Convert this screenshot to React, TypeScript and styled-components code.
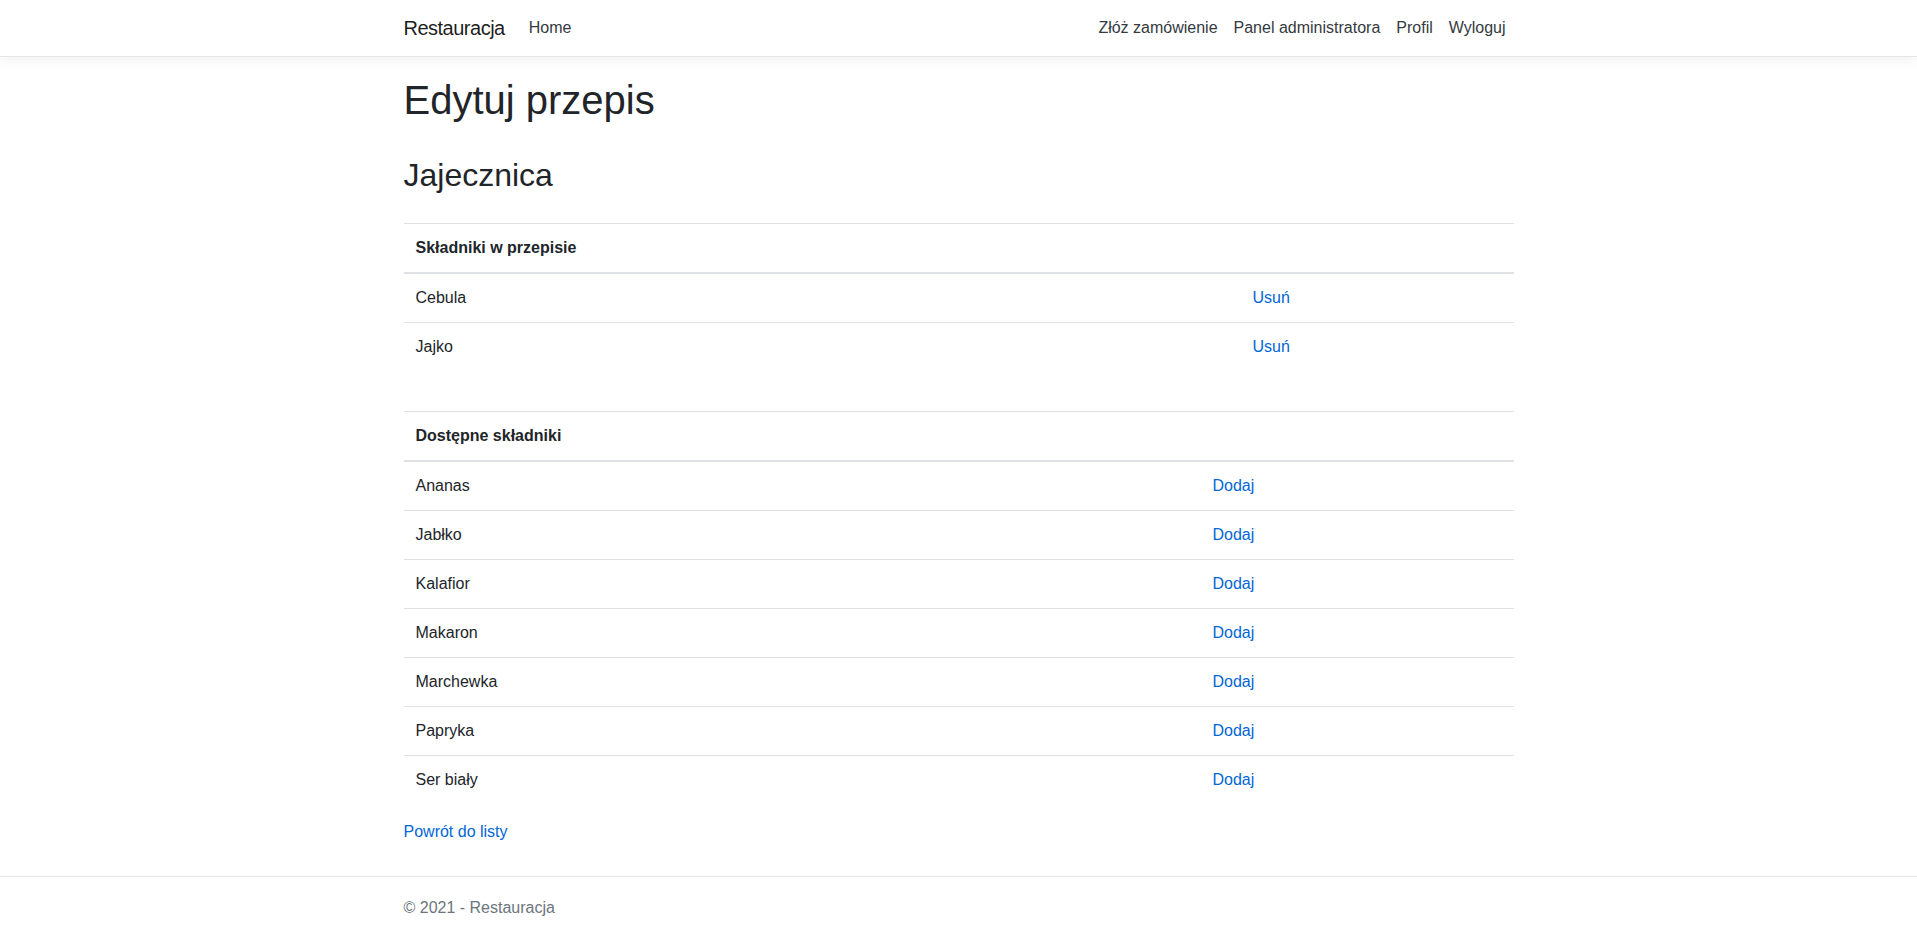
import React from "react";
import styled, { createGlobalStyle } from "styled-components";

const GlobalStyle = createGlobalStyle`
  *, *::before, *::after { box-sizing: border-box; }
  html { font-size: 16px; }
  body {
    margin: 0;
    font-family: "Liberation Sans", Arial, sans-serif;
    font-size: 16px;
    line-height: 1.5;
    color: #212529;
    background: #fff;
  }
`;

const Page = styled.div`
  min-height: 100vh;
  display: flex;
  flex-direction: column;
`;

const Container = styled.div`
  width: 100%;
  max-width: 1140px;
  padding: 0 15px;
  margin: 0 auto;
`;

const Navbar = styled.nav`
  background: #fff;
  border-bottom: 1px solid #e5e5e5;
  box-shadow: 0 0.25rem 0.75rem rgba(0, 0, 0, 0.05);
  padding: 8px 16px;
  margin-bottom: 16px;
`;

const NavInner = styled(Container)`
  display: flex;
  align-items: center;
`;

const Brand = styled.a`
  display: inline-block;
  padding: 5px 0;
  margin-right: 16px;
  font-size: 20px;
  line-height: 30px;
  letter-spacing: -0.5px;
  color: rgba(0, 0, 0, 0.9);
  text-decoration: none;
  white-space: nowrap;
`;

const NavList = styled.ul<{ $grow?: boolean }>`
  display: flex;
  list-style: none;
  margin: 0;
  padding: 0;
  flex-grow: ${(p) => (p.$grow ? 1 : 0)};
`;

const NavLink = styled.a`
  display: block;
  padding: 8px;
  color: #343a40;
  text-decoration: none;
  line-height: 24px;
`;

const Main = styled(Container)`
  flex: 1;
  padding-bottom: 16px;
`;

const Title = styled.h1`
  font-size: 40px;
  font-weight: 500;
  line-height: 1.2;
  margin: 0 0 5px;
  padding-top: 3px;
`;

const Subtitle = styled.h2`
  font-size: 32px;
  font-weight: 500;
  line-height: 1.2;
  margin: 30px 0 8px;
  padding-top: 2px;
`;

const Table = styled.table<{ $gap: number }>`
  width: 100%;
  border-collapse: collapse;
  margin: ${(p) => p.$gap}px 0 16px;
  color: #212529;
`;

const Th = styled.th<{ $w?: number }>`
  padding: 12px;
  text-align: left;
  vertical-align: bottom;
  font-weight: 700;
  border-top: 1px solid #dee2e6;
  border-bottom: 2px solid #dee2e6;
  ${(p) => (p.$w ? `width: ${p.$w}px;` : "")}
`;

const Td = styled.td`
  padding: 12px;
  vertical-align: top;
  border-top: 1px solid #dee2e6;
`;

const Link = styled.a`
  color: #0366d6;
  text-decoration: none;
`;

const Footer = styled.footer`
  border-top: 1px solid #e5e5e5;
  color: #6c757d;
  white-space: nowrap;
  padding-top: 4px;
  line-height: 53px;
`;

const inRecipe = ["Cebula", "Jajko"];
const available = [
  "Ananas",
  "Jabłko",
  "Kalafior",
  "Makaron",
  "Marchewka",
  "Papryka",
  "Ser biały",
];

export default function App() {
  return (
    <Page>
      <GlobalStyle />
      <Navbar>
        <NavInner>
          <Brand href="#">Restauracja</Brand>
          <NavList $grow>
            <li>
              <NavLink href="#">Home</NavLink>
            </li>
          </NavList>
          <NavList>
            <li>
              <NavLink href="#">Złóż zamówienie</NavLink>
            </li>
            <li>
              <NavLink href="#">Panel administratora</NavLink>
            </li>
            <li>
              <NavLink href="#">Profil</NavLink>
            </li>
            <li>
              <NavLink href="#">Wyloguj</NavLink>
            </li>
          </NavList>
        </NavInner>
      </Navbar>
      <Main as="main">
        <Title>Edytuj przepis</Title>
        <Subtitle>Jajecznica</Subtitle>
        <Table $gap={29}>
          <thead>
            <tr>
              <Th $w={837}>Składniki w przepisie</Th>
              <Th></Th>
            </tr>
          </thead>
          <tbody>
            {inRecipe.map((name) => (
              <tr key={name}>
                <Td>{name}</Td>
                <Td>
                  <Link href="#">Usuń</Link>
                </Td>
              </tr>
            ))}
          </tbody>
        </Table>
        <Table $gap={40}>
          <thead>
            <tr>
              <Th $w={797}>Dostępne składniki</Th>
              <Th></Th>
            </tr>
          </thead>
          <tbody>
            {available.map((name) => (
              <tr key={name}>
                <Td>{name}</Td>
                <Td>
                  <Link href="#">Dodaj</Link>
                </Td>
              </tr>
            ))}
          </tbody>
        </Table>
        <div>
          <Link href="#">Powrót do listy</Link>
        </div>
      </Main>
      <Footer>
        <Container>© 2021 - Restauracja</Container>
      </Footer>
    </Page>
  );
}
